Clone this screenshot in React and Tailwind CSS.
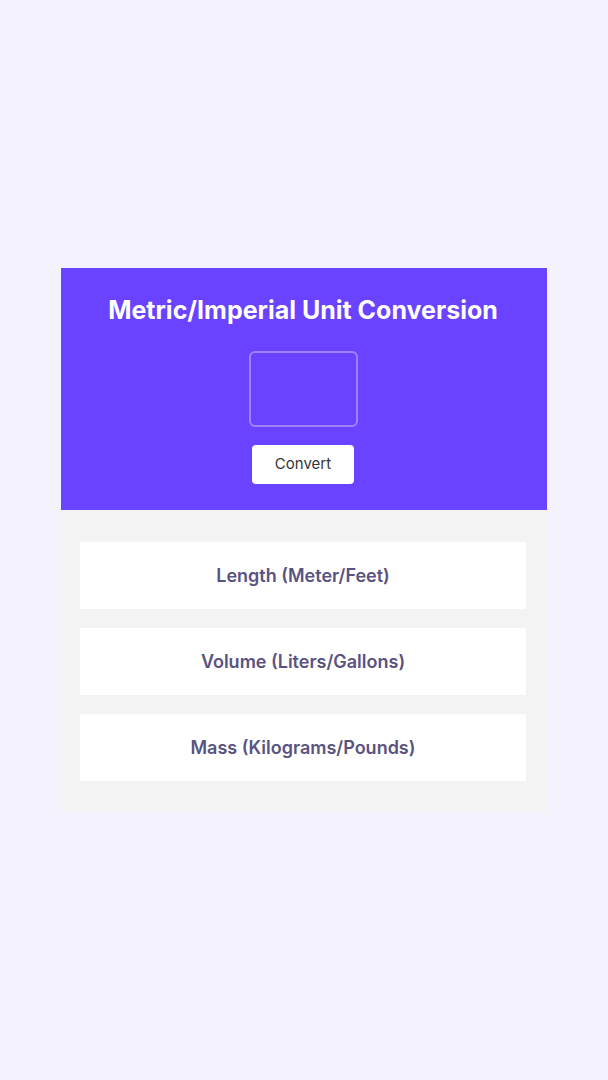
import React, { useState } from 'react';

const units = ['Length (Meter/Feet)', 'Volume (Liters/Gallons)', 'Mass (Kilograms/Pounds)'];

export default function App() {
  const [value, setValue] = useState('');

  return (
    <div className="min-h-screen w-full bg-[#F4F2FD] flex items-center justify-center" style={{ fontFamily: 'Inter, "Liberation Sans", sans-serif' }}>
      <div className="w-[486px] flex flex-col">
        {/* header */}
        <div className="bg-[#6943FF] flex flex-col items-center pt-[26px] pb-[26px] pr-[2px]">
          <h1 className="text-white text-[25px] leading-[32px] font-bold">Metric/Imperial Unit Conversion</h1>
          <input
            type="text"
            value={value}
            onChange={(e) => setValue(e.target.value)}
            className="mt-[25px] w-[109px] h-[76px] bg-transparent border-2 border-white/35 rounded-md text-white text-center text-4xl font-bold outline-none"
          />
          <button className="mt-[18px] w-[102px] h-[39px] bg-white rounded text-[15px] text-[#353535]">Convert</button>
        </div>

        {/* results */}
        <div className="bg-[#F3F3F3] pl-[19px] pr-[21px] pt-[32px] pb-[31px] flex flex-col gap-[19px]">
          {units.map((u) => (
            <div key={u} className="bg-white h-[67px] flex items-center justify-center">
              <span className="text-[18px] font-semibold text-[#5A5380]">{u}</span>
            </div>
          ))}
        </div>
      </div>
    </div>
  );
}
